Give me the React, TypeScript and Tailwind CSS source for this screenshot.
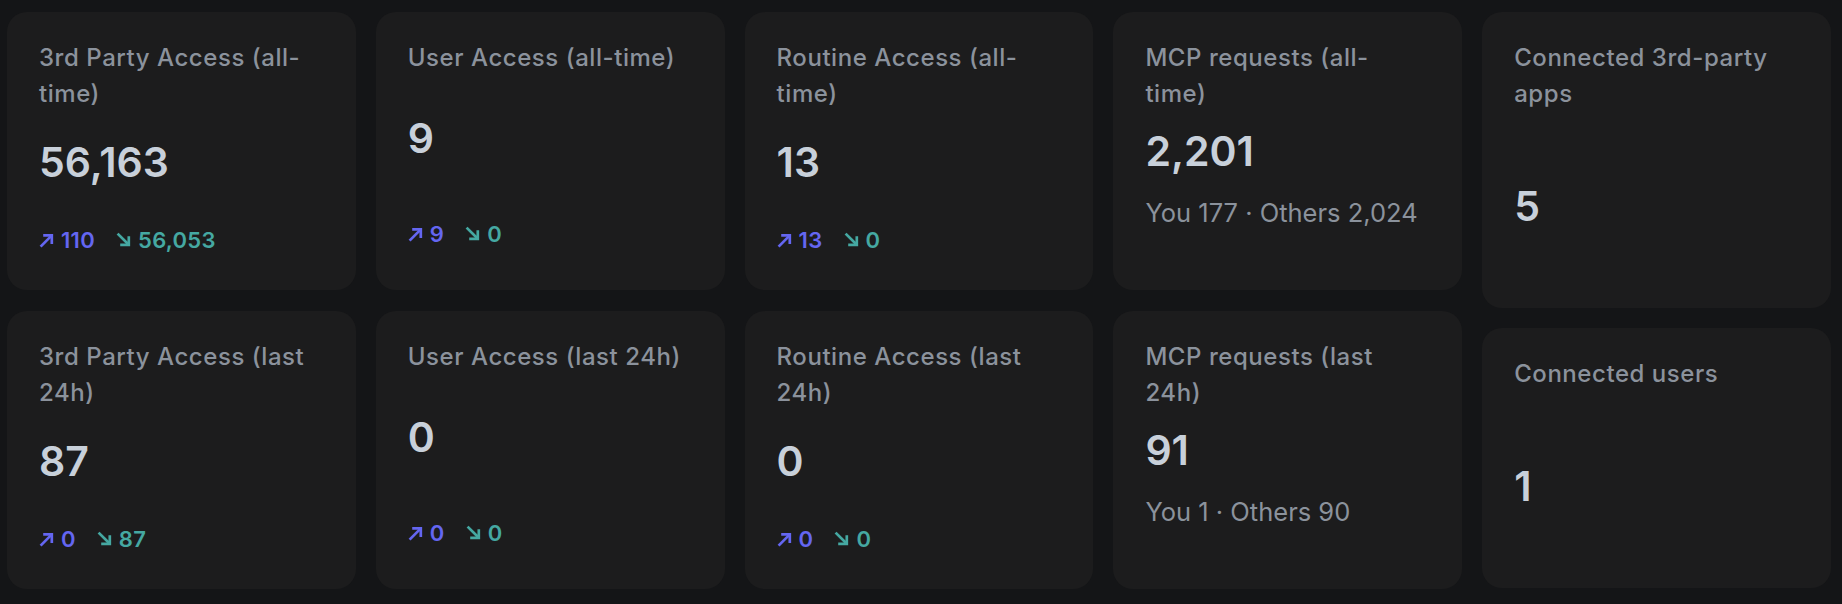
import React from "react";

const UpArrow = () => (
  <svg width="15" height="16" viewBox="0 0 15 16" fill="none" className="shrink-0">
    <path d="M1.6 14.6 L12.8 3.4" stroke="currentColor" strokeWidth="2.7" strokeLinecap="butt" />
    <path d="M4.2 3.4 H12.8 V12" stroke="currentColor" strokeWidth="2.7" strokeLinecap="butt" strokeLinejoin="miter" />
  </svg>
);

const DownArrow = () => (
  <svg width="15" height="16" viewBox="0 0 15 16" fill="none" className="shrink-0">
    <path d="M1.6 1.6 L12.8 12.8" stroke="currentColor" strokeWidth="2.7" strokeLinecap="butt" />
    <path d="M12.8 4.2 V12.8 H4.2" stroke="currentColor" strokeWidth="2.7" strokeLinecap="butt" strokeLinejoin="miter" />
  </svg>
);

type Kind = "arrow2" | "arrow1" | "mcp";

function Arrows({ up, down, mt }: { up: string; down: string; mt: string }) {
  return (
    <div className={`flex items-center gap-[21px] text-[22px] leading-[32px] font-semibold tracking-[0.3px] ${mt}`}>
      <span className="flex items-center gap-[7px] text-[#6466f1]">
        <UpArrow />
        <span>{up}</span>
      </span>
      <span className="flex items-center gap-[7px] text-[#45a8a2]">
        <DownArrow />
        <span>{down}</span>
      </span>
    </div>
  );
}

function StatCard({
  title,
  value,
  kind,
  up,
  down,
  text,
}: {
  title: string;
  value: string;
  kind: Kind;
  up?: string;
  down?: string;
  text?: string;
}) {
  const valueMt = kind === "arrow2" ? "mt-[26px]" : kind === "arrow1" ? "mt-[38px]" : "mt-[15px]";
  return (
    <div className="flex flex-col rounded-[20px] bg-[#1c1c1d] pt-[28px] pl-[32px] pr-[40px]">
      <div className="text-[24px] leading-[36px] font-medium tracking-[0.55px] text-[#8b929c]">{title}</div>
      <div className={`text-[41px] leading-[48px] font-semibold text-[#c8d0da] ${valueMt}`}>{value}</div>
      {kind === "mcp" ? (
        <div className="mt-[18px] whitespace-nowrap text-[25.5px] leading-[40px] text-[#8b929c]">{text}</div>
      ) : (
        <Arrows up={up!} down={down!} mt={kind === "arrow2" ? "mt-[38px]" : "mt-[56px]"} />
      )}
    </div>
  );
}

function SideCard({ title, value }: { title: string; value: string }) {
  return (
    <div className="flex flex-col rounded-[20px] bg-[#1c1c1d] pt-[28px] pl-[32px] pr-[40px] pb-[78px]">
      <div className="text-[24px] leading-[36px] font-medium tracking-[0.55px] text-[#8b929c]">{title}</div>
      <div className="mt-[70px] text-[41px] leading-[48px] font-semibold text-[#c8d0da]">{value}</div>
    </div>
  );
}

export default function App() {
  return (
    <div
      className="min-h-screen bg-[#141517] pl-[7px] pr-[11px] pt-[12px]"
      style={{ fontFamily: "Inter, 'Noto Sans', sans-serif" }}
    >
      <div className="grid grid-cols-5 grid-rows-[278px_278px] gap-x-[20px] gap-y-[21px]">
        <StatCard title="3rd Party Access (all-time)" value="56,163" kind="arrow2" up="110" down="56,053" />
        <StatCard title="User Access (all-time)" value="9" kind="arrow1" up="9" down="0" />
        <StatCard title="Routine Access (all-time)" value="13" kind="arrow2" up="13" down="0" />
        <StatCard title="MCP requests (all-time)" value="2,201" kind="mcp" text="You 177 · Others 2,024" />
        <div className="col-start-5 row-span-2 row-start-1 flex flex-col gap-[20px]">
          <SideCard title="Connected 3rd-party apps" value="5" />
          <SideCard title="Connected users" value="1" />
        </div>
        <StatCard title="3rd Party Access (last 24h)" value="87" kind="arrow2" up="0" down="87" />
        <StatCard title="User Access (last 24h)" value="0" kind="arrow1" up="0" down="0" />
        <StatCard title="Routine Access (last 24h)" value="0" kind="arrow2" up="0" down="0" />
        <StatCard title="MCP requests (last 24h)" value="91" kind="mcp" text="You 1 · Others 90" />
      </div>
    </div>
  );
}
